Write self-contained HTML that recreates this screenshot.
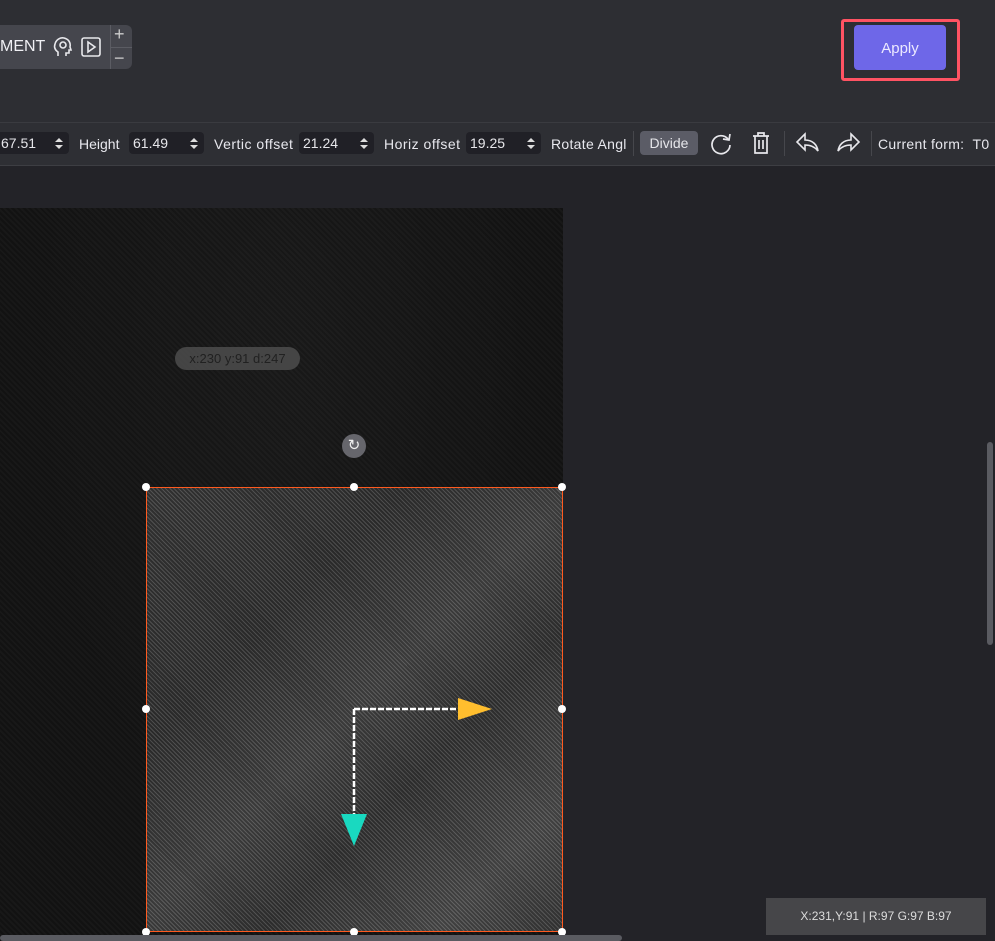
<!DOCTYPE html>
<html><head><style>
body{margin:0;width:995px;height:941px;overflow:hidden;background:#232328;font-family:"Liberation Sans",sans-serif;position:relative;color:#e6e6ea}
.a{position:absolute}
.t{font-size:14px;color:#e8e8ee}
.inp{position:absolute;top:132px;height:22px;background:#202026;border-radius:4px;font-size:14px;color:#e6e6ea;line-height:22px;padding-left:4px;box-sizing:border-box}
.inp svg{position:absolute;right:5px;top:5px}
</style></head><body>
<div class="a" style="left:0;top:0;width:995px;height:122px;background:#2d2e33"></div>
<div class="a" style="left:0;top:122px;width:995px;height:42px;background:#2e2f34;border-top:1px solid #3a3b40;border-bottom:1px solid #3d3e43"></div>
<div class="a" style="left:0;top:25px;width:132px;height:44px;background:#45464d;border-radius:0 6px 6px 0"></div>
<div class="a" style="left:110px;top:25px;width:1px;height:44px;background:#5b5c63"></div>
<div class="a" style="left:111px;top:47px;width:21px;height:1px;background:#5b5c63"></div>
<div class="a" style="left:0;top:38px;font-size:16px;color:#f0f0f4">MENT</div>
<svg class="a" style="left:52px;top:35px" width="22" height="24" viewBox="0 0 22 24" fill="none" stroke="#e8e8ec" stroke-width="1.6"><path d="M6 21v-4C3 15 2 12 3 9c1-4 5-7 9-6 4 1 7 4 6 9l1 3h-2v3h-3v3"/><circle cx="11" cy="10" r="3"/></svg>
<svg class="a" style="left:80px;top:36px" width="22" height="22" fill="none" stroke="#e8e8ec" stroke-width="1.6"><rect x="2" y="2" width="18" height="18" rx="2"/><path d="M8 6l7 5-7 5z"/></svg>
<div class="a" style="left:114px;top:24px;font-size:18px;color:#ccc">+</div>
<div class="a" style="left:114px;top:48px;font-size:18px;color:#ccc">−</div>
<div class="a" style="left:841px;top:19px;width:119px;height:62px;border:3px solid #ff5363;border-radius:3px;box-sizing:border-box"></div>
<div class="a" style="left:854px;top:25px;width:92px;height:45px;background:#6e67e8;border-radius:4px;font-size:15px;text-align:center;line-height:47px;color:#ece9ff">Apply</div>
<div class="inp" style="left:-3px;width:72px">67.51<svg width="10" height="13"><path d="M1 5l4-4 4 4zM1 8l4 4 4-4z" fill="#ddd"/></svg></div>
<div class="a t" style="left:79px;top:136px">Height</div>
<div class="inp" style="left:129px;width:75px">61.49<svg width="10" height="13"><path d="M1 5l4-4 4 4zM1 8l4 4 4-4z" fill="#ddd"/></svg></div>
<div class="a t" style="left:214px;top:136px;letter-spacing:0.5px">Vertic offset</div>
<div class="inp" style="left:299px;width:75px">21.24<svg width="10" height="13"><path d="M1 5l4-4 4 4zM1 8l4 4 4-4z" fill="#ddd"/></svg></div>
<div class="a t" style="left:384px;top:136px;letter-spacing:0.5px">Horiz offset</div>
<div class="inp" style="left:466px;width:75px">19.25<svg width="10" height="13"><path d="M1 5l4-4 4 4zM1 8l4 4 4-4z" fill="#ddd"/></svg></div>
<div class="a t" style="left:551px;top:136px;letter-spacing:0.3px">Rotate Angl</div>
<div class="a" style="left:633px;top:131px;width:1px;height:25px;background:#46474c"></div>
<div class="a" style="left:640px;top:131px;width:58px;height:24px;background:#5b5c66;border-radius:4px;font-size:14px;text-align:center;line-height:25px">Divide</div>
<svg class="a" style="left:709px;top:131px" width="24" height="24" fill="none" stroke="#e8e8ec" stroke-width="1.7"><path d="M19 8A9 9 0 1 0 21 14"/><path d="M21 3l-1 6-6-1"/></svg>
<svg class="a" style="left:750px;top:131px" width="22" height="24" fill="none" stroke="#e8e8ec" stroke-width="1.7"><path d="M3 5h16M8 5V2h6v3M5 5v17h12V5M9 9v9M13 9v9"/></svg>
<div class="a" style="left:784px;top:131px;width:1px;height:25px;background:#46474c"></div>
<svg class="a" style="left:795px;top:132px" width="26" height="22" fill="none" stroke="#e8e8ec" stroke-width="1.6"><path d="M10 2L2 10l8 8v-5c6 0 10 2 13 6-1-6-5-11-13-11V2z"/></svg>
<svg class="a" style="left:835px;top:132px" width="26" height="22" fill="none" stroke="#e8e8ec" stroke-width="1.6"><path d="M16 2l8 8-8 8v-5c-6 0-10 2-13 6 1-6 5-11 13-11V2z"/></svg>
<div class="a" style="left:871px;top:131px;width:1px;height:25px;background:#46474c"></div>
<div class="a t" style="left:878px;top:136px;letter-spacing:0.3px">Current form:&nbsp; T0</div>
<div class="a" style="left:0;top:208px;width:563px;height:733px;background:radial-gradient(ellipse at 50% 20%,#1c1c1c,#121212 70%);background-color:#141414"></div>
<div class="a" style="left:0;top:208px;width:563px;height:733px;opacity:.35;background:repeating-linear-gradient(45deg,#222 0 2px,#111 2px 4px)"></div>
<div class="a" style="left:146px;top:487px;width:417px;height:445px;background:linear-gradient(135deg,#3a3a3a 0%,#2f2f2f 30%,#4a4a4a 50%,#333 65%,#555 85%,#3a3a3a 100%)"></div>
<div class="a" style="left:146px;top:487px;width:417px;height:445px;opacity:.4;background:repeating-linear-gradient(45deg,#777 0 1px,#222 1px 3px)"></div>
<div class="a" style="left:146px;top:487px;width:417px;height:445px;border:1px solid #ff5a1f;box-sizing:border-box"></div>
<div class="a" style="left:175px;top:347px;width:125px;height:23px;background:#4a4a4a;border-radius:12px;font-size:13px;color:#222;text-align:center;line-height:23px;opacity:.9">x:230 y:91 d:247</div>
<div class="a" style="left:342px;top:434px;width:24px;height:24px;border-radius:50%;background:#66666c;color:#eee;text-align:center;line-height:24px;font-size:15px">↻</div>
<div class="a" style="left:142px;top:483px;width:8px;height:8px;border-radius:50%;background:#fff"></div>
<div class="a" style="left:350px;top:483px;width:8px;height:8px;border-radius:50%;background:#fff"></div>
<div class="a" style="left:558px;top:483px;width:8px;height:8px;border-radius:50%;background:#fff"></div>
<div class="a" style="left:142px;top:705px;width:8px;height:8px;border-radius:50%;background:#fff"></div>
<div class="a" style="left:558px;top:705px;width:8px;height:8px;border-radius:50%;background:#fff"></div>
<div class="a" style="left:142px;top:928px;width:8px;height:8px;border-radius:50%;background:#fff"></div>
<div class="a" style="left:350px;top:928px;width:8px;height:8px;border-radius:50%;background:#fff"></div>
<div class="a" style="left:558px;top:928px;width:8px;height:8px;border-radius:50%;background:#fff"></div>
<svg class="a" style="left:340px;top:690px" width="160" height="160"><path d="M14 19h106M14 19v110" stroke="#fff" stroke-width="2.5" stroke-dasharray="6 2"/><path d="M118 8l34 11-34 11z" fill="#ffbe2e"/><path d="M1 124l13 32 13-32z" fill="#19d9c0"/></svg>
<div class="a" style="left:0;top:935px;width:622px;height:6px;background:#5a5b61;border-radius:3px"></div>
<div class="a" style="left:987px;top:442px;width:6px;height:203px;background:#5a5b61;border-radius:3px"></div>
<div class="a" style="left:766px;top:898px;width:220px;height:37px;background:#464649;font-size:12px;color:#ddd;text-align:center;line-height:37px">X:231,Y:91 | R:97 G:97 B:97</div>
</body></html>
